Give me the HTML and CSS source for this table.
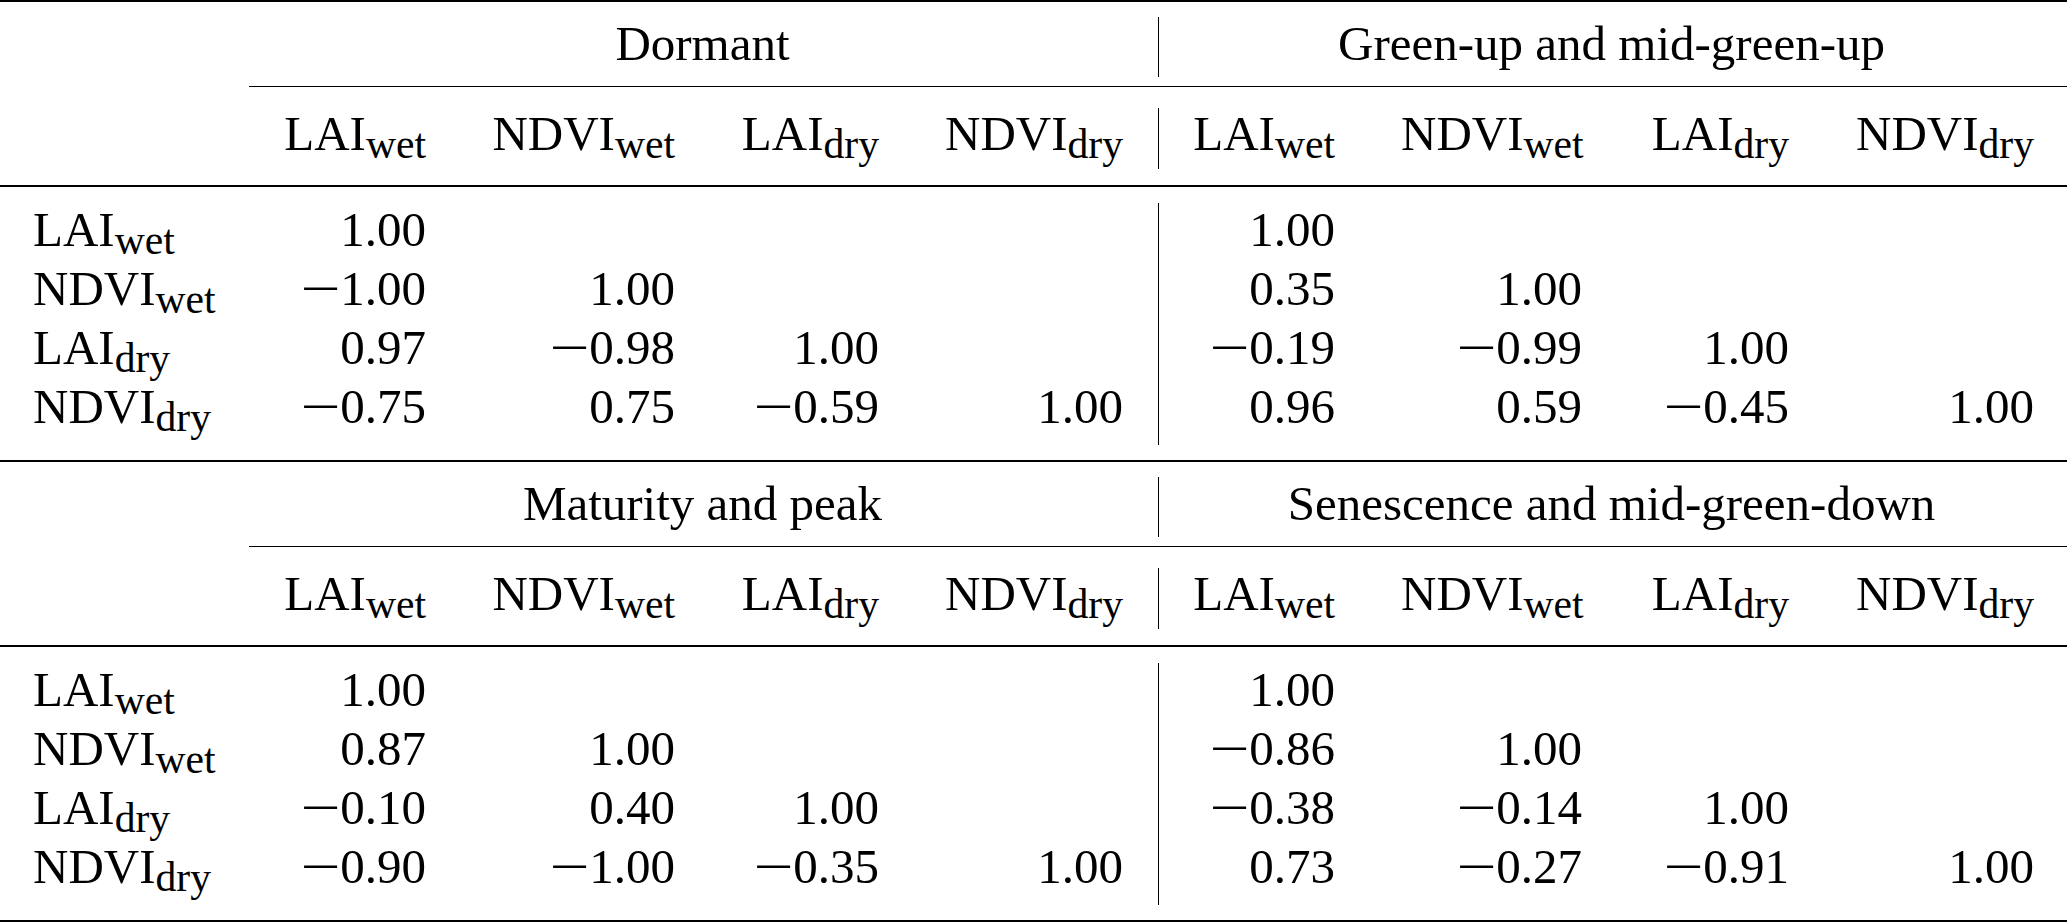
FILE: index.html
```html
<!DOCTYPE html>
<html lang="en">
<head>
<meta charset="utf-8">
<title>Correlation matrices</title>
<link rel="stylesheet" href="styles.css">
</head>
<body>
<table class="corr">
  <colgroup>
    <col class="w-label">
    <col class="w-lai">
    <col class="w-ndvi">
    <col class="w-laid">
    <col class="w-ndvid">
    <col class="w-lai2">
    <col class="w-ndvi2">
    <col class="w-laid2">
    <col class="w-ndvid2">
  </colgroup>
  <tbody class="block">
    <tr class="group-row">
      <th class="corner"></th>
      <th colspan="4" class="group">Dormant</th>
      <th colspan="4" class="group sep">Green-up and mid-green-up</th>
    </tr>
    <tr class="head-row">
      <th class="corner"></th>
      <th>LAI<sub>wet</sub></th>
      <th>NDVI<sub>wet</sub></th>
      <th>LAI<sub>dry</sub></th>
      <th>NDVI<sub>dry</sub></th>
      <th class="sep">LAI<sub>wet</sub></th>
      <th>NDVI<sub>wet</sub></th>
      <th>LAI<sub>dry</sub></th>
      <th>NDVI<sub>dry</sub></th>
    </tr>
    <tr class="data first">
      <th class="label">LAI<sub>wet</sub></th>
      <td>1.00</td><td></td><td></td><td></td>
      <td class="sep">1.00</td><td></td><td></td><td></td>
    </tr>
    <tr class="data">
      <th class="label">NDVI<sub>wet</sub></th>
      <td><span class="minus">−</span>1.00</td><td>1.00</td><td></td><td></td>
      <td class="sep">0.35</td><td>1.00</td><td></td><td></td>
    </tr>
    <tr class="data">
      <th class="label">LAI<sub>dry</sub></th>
      <td>0.97</td><td><span class="minus">−</span>0.98</td><td>1.00</td><td></td>
      <td class="sep"><span class="minus">−</span>0.19</td><td><span class="minus">−</span>0.99</td><td>1.00</td><td></td>
    </tr>
    <tr class="data last">
      <th class="label">NDVI<sub>dry</sub></th>
      <td><span class="minus">−</span>0.75</td><td>0.75</td><td><span class="minus">−</span>0.59</td><td>1.00</td>
      <td class="sep">0.96</td><td>0.59</td><td><span class="minus">−</span>0.45</td><td>1.00</td>
    </tr>
  </tbody>
  <tbody class="block final">
    <tr class="group-row">
      <th class="corner"></th>
      <th colspan="4" class="group">Maturity and peak</th>
      <th colspan="4" class="group sep">Senescence and mid-green-down</th>
    </tr>
    <tr class="head-row">
      <th class="corner"></th>
      <th>LAI<sub>wet</sub></th>
      <th>NDVI<sub>wet</sub></th>
      <th>LAI<sub>dry</sub></th>
      <th>NDVI<sub>dry</sub></th>
      <th class="sep">LAI<sub>wet</sub></th>
      <th>NDVI<sub>wet</sub></th>
      <th>LAI<sub>dry</sub></th>
      <th>NDVI<sub>dry</sub></th>
    </tr>
    <tr class="data first">
      <th class="label">LAI<sub>wet</sub></th>
      <td>1.00</td><td></td><td></td><td></td>
      <td class="sep">1.00</td><td></td><td></td><td></td>
    </tr>
    <tr class="data">
      <th class="label">NDVI<sub>wet</sub></th>
      <td>0.87</td><td>1.00</td><td></td><td></td>
      <td class="sep"><span class="minus">−</span>0.86</td><td>1.00</td><td></td><td></td>
    </tr>
    <tr class="data">
      <th class="label">LAI<sub>dry</sub></th>
      <td><span class="minus">−</span>0.10</td><td>0.40</td><td>1.00</td><td></td>
      <td class="sep"><span class="minus">−</span>0.38</td><td><span class="minus">−</span>0.14</td><td>1.00</td><td></td>
    </tr>
    <tr class="data last">
      <th class="label">NDVI<sub>dry</sub></th>
      <td><span class="minus">−</span>0.90</td><td><span class="minus">−</span>1.00</td><td><span class="minus">−</span>0.35</td><td>1.00</td>
      <td class="sep">0.73</td><td><span class="minus">−</span>0.27</td><td><span class="minus">−</span>0.91</td><td>1.00</td>
    </tr>
  </tbody>
</table>
</body>
</html>
```

FILE: styles.css
```css
html, body {
  margin: 0;
  padding: 0;
  background: #ffffff;
}

body {
  font-family: "Liberation Serif", "Times New Roman", serif;
  font-size: 49px;
  color: #000000;
}

.corr {
  width: 2067px;
  table-layout: fixed;
  border-collapse: separate;
  border-spacing: 0;
}

.w-label { width: 249px; }
.w-lai { width: 210px; }
.w-ndvi { width: 249px; }
.w-laid { width: 204px; }
.w-ndvid { width: 244px; }
.w-lai2 { width: 212px; }
.w-ndvi2 { width: 247px; }
.w-laid2 { width: 207px; }
.w-ndvid2 { width: 245px; }

.corr th,
.corr td {
  padding: 0 33px;
  font-weight: normal;
  text-align: right;
  vertical-align: top;
  white-space: nowrap;
  position: relative;
}

.corr sub {
  font-size: 0.85em;
  vertical-align: -8px;
  line-height: 0;
}

.minus {
  display: inline-block;
  margin-right: 6px;
  transform: scaleX(1.45);
  transform-origin: 50% 50%;
}

/* group title row (toprule / midrule between blocks above it) */
.group-row th {
  border-top: 2px solid #000;
  padding-top: 12px;
  padding-bottom: 12px;
  line-height: 60px;
}

.group-row .group {
  text-align: center;
}

/* column header row, with cmidrule above */
.head-row th {
  border-top: 1px solid #000;
  padding-top: 17px;
  padding-bottom: 21px;
  line-height: 60px;
}

.head-row .corner {
  border-top-color: transparent;
}

/* data rows */
.data th,
.data td {
  line-height: 59px;
}

.data .label {
  text-align: left;
}

.data.first th,
.data.first td {
  border-top: 2px solid #000;
  padding-top: 13px;
}

.data.last th,
.data.last td {
  padding-bottom: 24px;
}

.final .data.last th,
.final .data.last td {
  border-bottom: 2px solid #000;
}

/* vertical rule between the two phases */
.sep::before {
  content: "";
  position: absolute;
  left: 2px;
  width: 1px;
  top: 0;
  bottom: 0;
  background: #000;
}

.group-row .sep::before {
  top: 15px;
  bottom: 9px;
}

.head-row .sep::before {
  top: 21px;
  bottom: 16px;
}

.data.first .sep::before {
  top: 16px;
}

.data.last .sep::before {
  bottom: 15px;
}
```
